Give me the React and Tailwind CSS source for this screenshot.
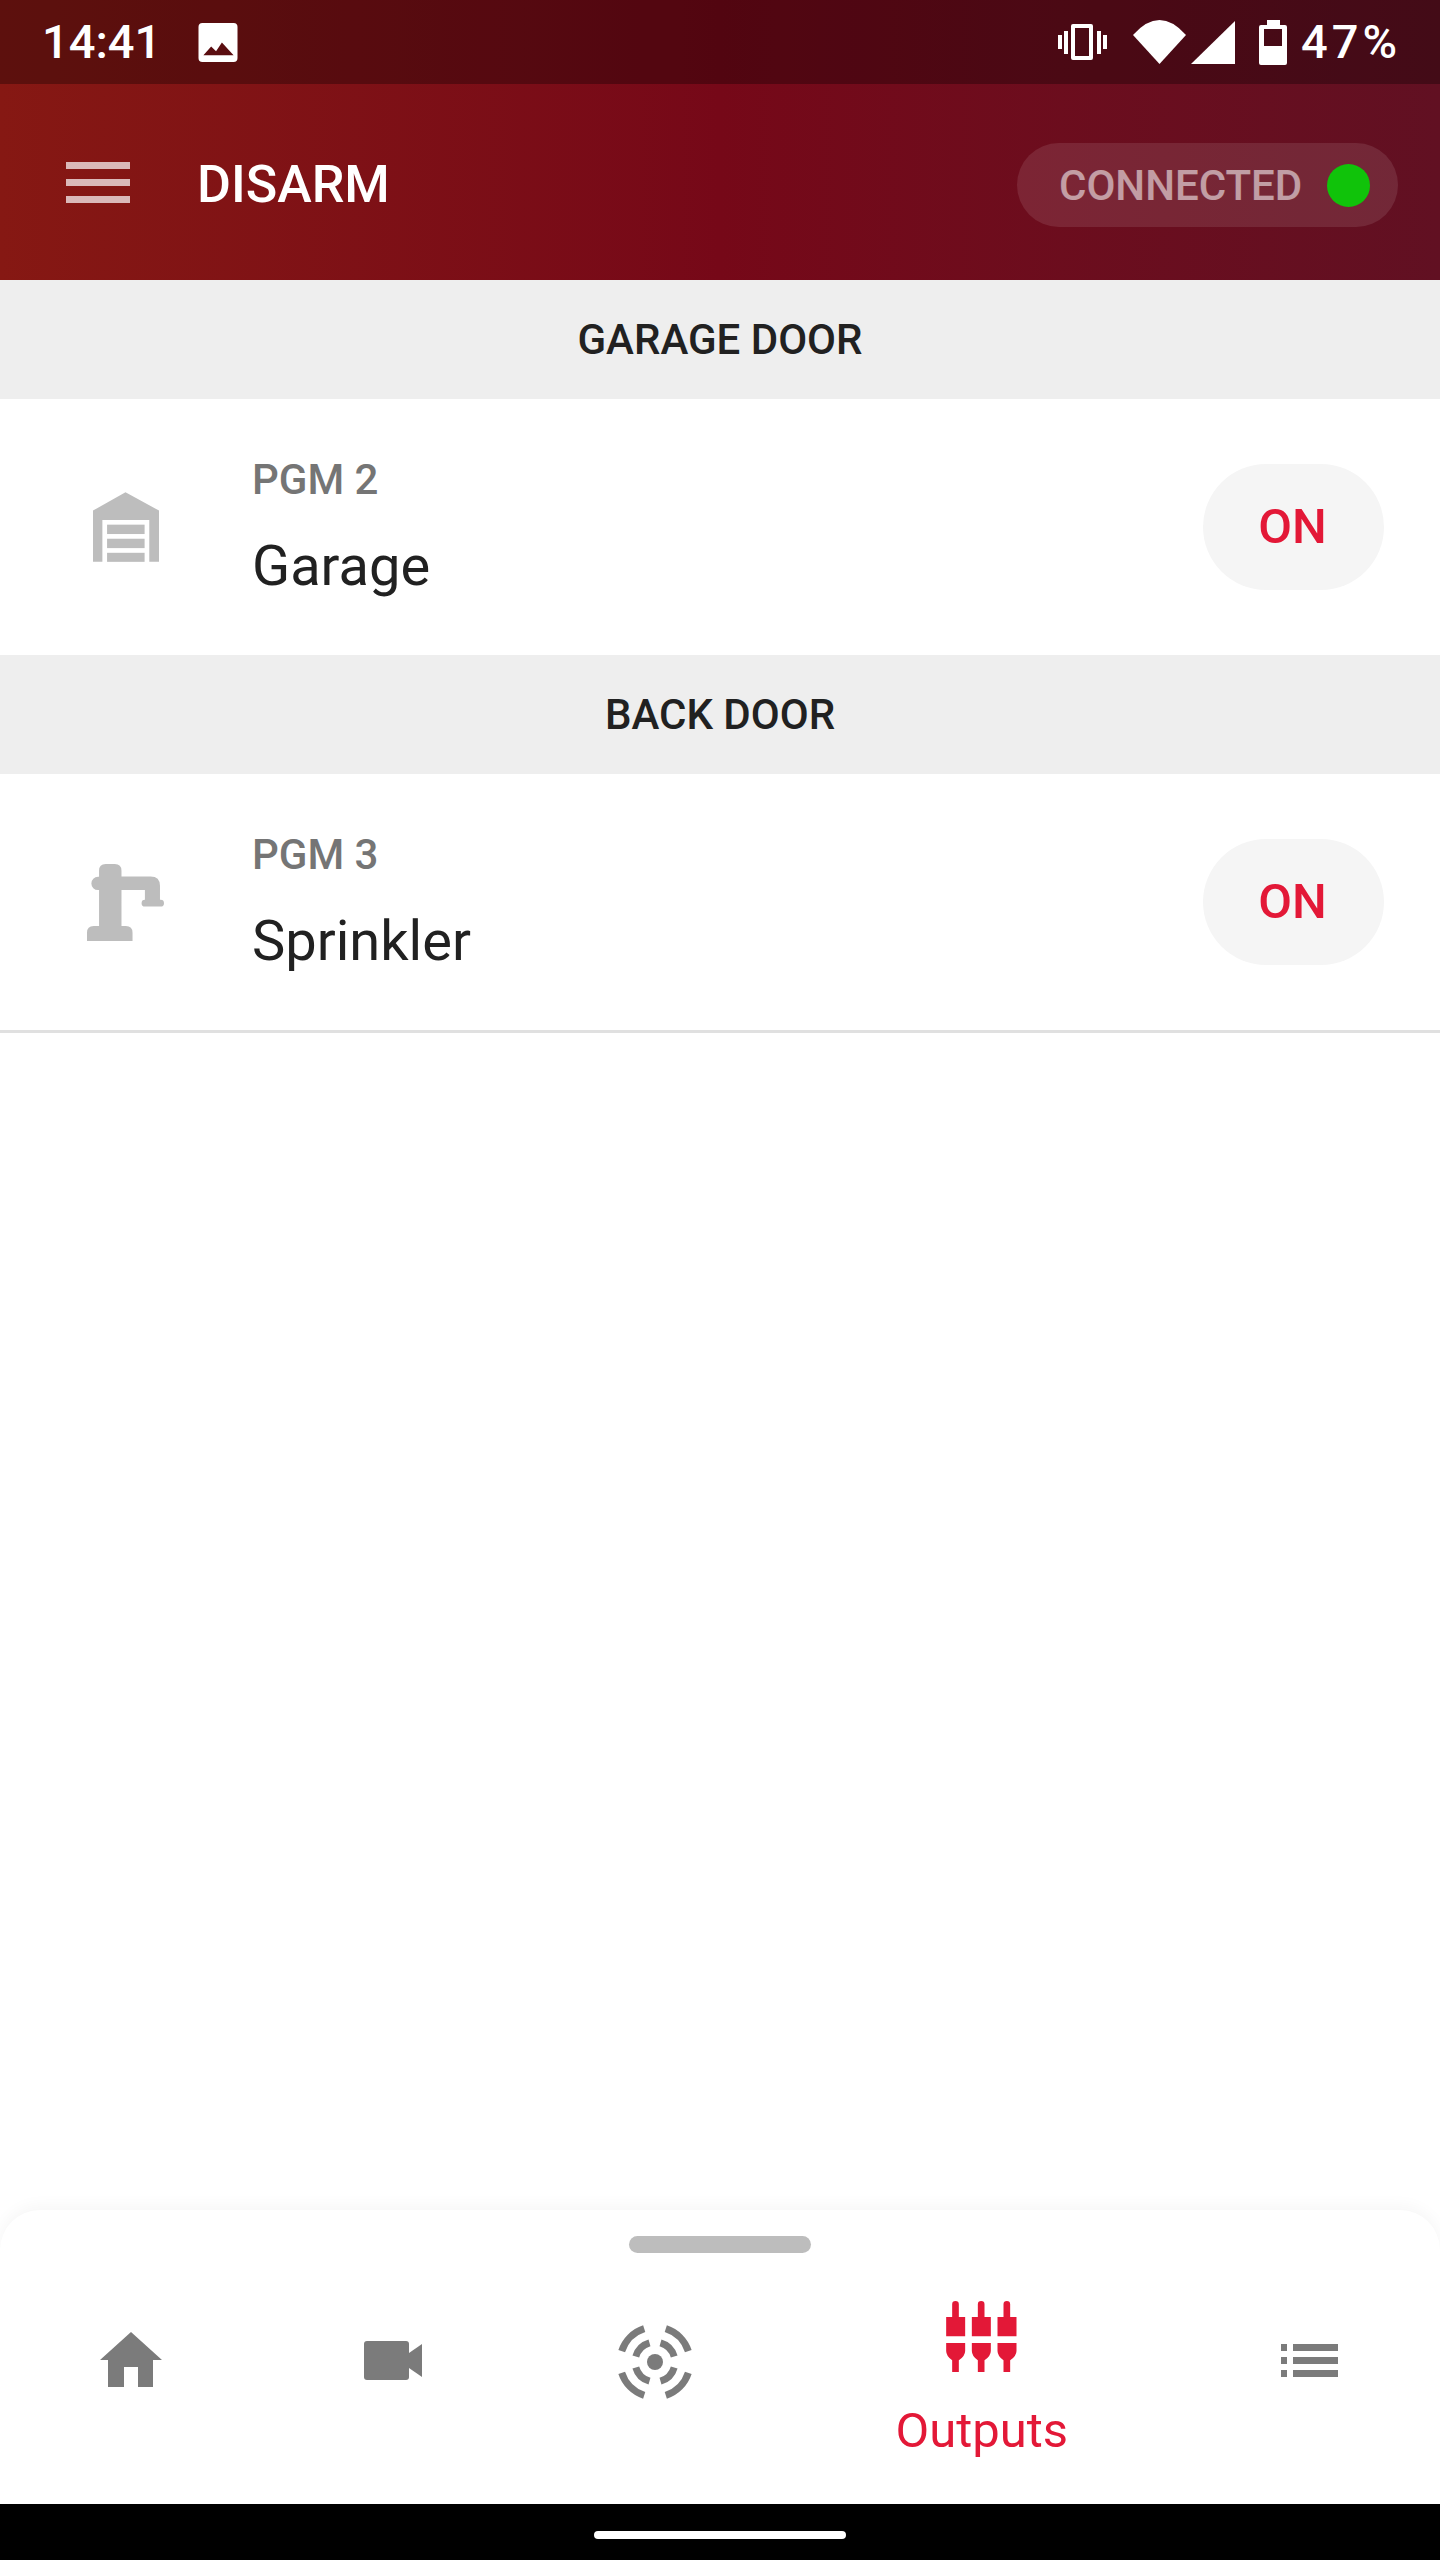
import React from "react";

const GarageIcon = () => (
  <svg width="66" height="70" viewBox="0 0 197 208" className="ml-[6px] fill-[#bdbdbd]">
    <path d="M97 0L197 55V208H168V83H28V208H0V55Z" />
    <rect x="42" y="97" width="112" height="28" />
    <rect x="42" y="139" width="112" height="28" />
    <rect x="42" y="181" width="112" height="27" />
  </svg>
);

const SprinklerIcon = () => (
  <svg width="77" height="77" viewBox="0 0 230 230" className="fill-[#bdbdbd]">
    <path d="M36 185V78H33a20 20 0 0 1 0-40H36V20Q36 0 56 0H83Q103 0 103 20V37H190Q218 37 218 65V107H220a10 10 0 0 1 0 20H173a10 10 0 0 1 0-20V78H103V185H116Q136 185 136 205V230H0V205Q0 185 20 185Z" />
  </svg>
);

const HomeIcon = () => (
  <svg width="62" height="55" viewBox="0 0 62 55" className="mb-[5px] fill-[#7b7b7b]">
    <path d="M31 0L62 28H53V55H38V35H24V55H8V28H0Z" />
  </svg>
);

const VideoIcon = () => (
  <svg width="58" height="39" viewBox="0 0 58 39" className="mb-[3px] fill-[#7b7b7b]">
    <rect width="45" height="39" rx="3" />
    <path d="M45 12L58 3V36L45 27Z" />
  </svg>
);

const RadarIcon = () => (
  <svg width="80" height="80" viewBox="-40 -40 80 80" fill="none" stroke="#7b7b7b" strokeWidth="7">
    <circle r="8" fill="#7b7b7b" stroke="none" />
    <path d="M-10.8 -33.3A35 35 0 0 0 -33.3 -10.8" />
    <path d="M10.8 -33.3A35 35 0 0 1 33.3 -10.8" />
    <path d="M-10.8 33.3A35 35 0 0 1 -33.3 10.8" />
    <path d="M10.8 33.3A35 35 0 0 0 33.3 10.8" />
    <path d="M-5.5 -19.2A20 20 0 0 0 -19.2 -5.5" />
    <path d="M5.5 -19.2A20 20 0 0 1 19.2 -5.5" />
    <path d="M-5.5 19.2A20 20 0 0 1 -19.2 5.5" />
    <path d="M5.5 19.2A20 20 0 0 0 19.2 5.5" />
  </svg>
);

const OutputsIcon = () => (
  <svg width="71" height="71" viewBox="0 0 212 213" className="fill-[#e31837]">
    {[0, 77, 154].map((x) => (
      <g key={x} transform={`translate(${x})`}>
        <path d="M18 48V10a10 10 0 0 1 20 0V48H57V106H0V48Z" />
        <path d="M0 126H57V150Q57 165 38 178V213H18V178Q0 165 0 150Z" />
      </g>
    ))}
  </svg>
);

const ListIcon = () => (
  <svg width="57" height="33" viewBox="0 0 57 33" className="mb-[3px] fill-[#7b7b7b]">
    <rect y="0" width="6" height="7" />
    <rect y="13" width="6" height="7" />
    <rect y="26" width="6" height="7" />
    <rect x="12" y="0" width="45" height="7" />
    <rect x="12" y="13" width="45" height="7" />
    <rect x="12" y="26" width="45" height="7" />
  </svg>
);

const SectionHeader = ({ title }) => (
  <div className="h-[119px] bg-[#eeeeee] flex items-center justify-center text-[42px] font-medium text-[#212121]">
    {title}
  </div>
);

const OutputRow = ({ icon, pgm, name }) => (
  <div className="h-[256px] flex items-center bg-white">
    <div className="w-[252px] pl-[87px] flex items-center shrink-0">{icon}</div>
    <div className="flex-1 flex flex-col pt-[4px]">
      <span className="text-[42px] leading-[48px] font-medium text-[#757575]">{pgm}</span>
      <span className="mt-[26px] text-[56px] leading-[72px] text-[#212121]">{name}</span>
    </div>
    <button className="w-[181px] h-[126px] mr-[56px] pr-[2px] rounded-full bg-[#f5f5f5] text-[49px] font-medium text-[#e31837]">
      ON
    </button>
  </div>
);

const NavItem = ({ icon, wide, label }) => (
  <div className={`flex flex-col items-center ${wide ? "flex-[1.5]" : "flex-1"}`}>
    <div className={`flex items-center justify-center ${wide ? "h-[71px]" : "h-[120px] mt-[1px]"}`}>{icon}</div>
    {label && <span className="mt-[31px] text-[49px] leading-[56px] text-[#e31837]">{label}</span>}
  </div>
);

export default function App() {
  return (
    <div className="w-[1440px] h-[2560px] flex flex-col bg-white font-['Roboto',sans-serif]">
      <div className="bg-linear-to-r from-[#861813] via-[#760818] to-[#611022]">
        <div className="h-[84px] bg-black/30 flex items-center text-white text-[47px] font-medium pl-[42px] pr-[39px]">
          <span>14:41</span>
          <svg width="40" height="39" viewBox="0 0 40 40" className="ml-[37px]">
            <rect width="40" height="40" rx="4" fill="#fff" />
            <path d="M5 33L13 24L18 29L24 20L36 33Z" fill="#5a0d10" />
          </svg>
          <div className="flex-1" />
          <svg width="49" height="36" viewBox="0 0 49 36" fill="#fff">
            <path fillRule="evenodd" d="M15 0H33a2 2 0 0 1 2 2V34a2 2 0 0 1-2 2H15a2 2 0 0 1-2-2V2a2 2 0 0 1 2-2ZM17 4V32H31V4Z" />
            <rect x="0" y="11" width="4" height="14" />
            <rect x="6" y="7" width="4" height="23" />
            <rect x="39" y="7" width="4" height="23" />
            <rect x="45" y="11" width="4" height="14" />
          </svg>
          <svg width="53" height="44" viewBox="0 0 53 44" fill="#fff" className="ml-[26px]">
            <path d="M0 15Q26.5 -15 53 15L26.5 44Z" />
          </svg>
          <svg width="44" height="43" viewBox="0 0 44 43" fill="#fff" className="ml-[5px]">
            <path d="M44 0V43H0Z" />
          </svg>
          <svg width="28" height="45" viewBox="0 0 28 45" fill="#fff" className="ml-[24px]">
            <path fillRule="evenodd" d="M8 0H21V5H26a2 2 0 0 1 2 2V43a2 2 0 0 1-2 2H2a2 2 0 0 1-2-2V7a2 2 0 0 1 2-2H8ZM5 9V26H23V9Z" />
          </svg>
          <span className="ml-[14px] tracking-[4px]">47%</span>
        </div>
        <div className="h-[196px] flex items-center pt-[6px] pl-[66px] pr-[42px]">
          <div className="flex flex-col gap-[10px] w-[64px] -mt-[6px]">
            <div className="h-[7px] bg-white/70" />
            <div className="h-[7px] bg-white/70" />
            <div className="h-[7px] bg-white/70" />
          </div>
          <span className="ml-[67px] text-[52px] font-medium text-white">DISARM</span>
          <div className="flex-1" />
          <div className="h-[84px] w-[381px] rounded-full bg-white/10 flex items-center pl-[42px] pr-[28px]">
            <span className="text-[42px] font-medium text-white/55">CONNECTED</span>
            <div className="flex-1" />
            <div className="w-[43px] h-[43px] rounded-full bg-[#10c30a]" />
          </div>
        </div>
      </div>

      <SectionHeader title="GARAGE DOOR" />
      <OutputRow icon={<GarageIcon />} pgm="PGM 2" name="Garage" />
      <SectionHeader title="BACK DOOR" />
      <OutputRow icon={<SprinklerIcon />} pgm="PGM 3" name="Sprinkler" />
      <div className="h-[3px] bg-[#e0e0e0]" />

      <div className="flex-1" />

      <div className="h-[294px] rounded-t-[40px] bg-white shadow-[0_-4px_16px_rgba(0,0,0,0.04)] flex flex-col">
        <div className="mt-[26px] self-center w-[182px] h-[17px] rounded-full bg-[#bdbdbd]" />
        <div className="mt-[48px] flex">
          <NavItem icon={<HomeIcon />} />
          <NavItem icon={<VideoIcon />} />
          <NavItem icon={<RadarIcon />} />
          <NavItem icon={<OutputsIcon />} wide label="Outputs" />
          <NavItem icon={<ListIcon />} />
        </div>
      </div>
      <div className="h-[56px] bg-black flex justify-center pt-[27px]">
        <div className="w-[252px] h-[8px] rounded-full bg-white" />
      </div>
    </div>
  );
}
